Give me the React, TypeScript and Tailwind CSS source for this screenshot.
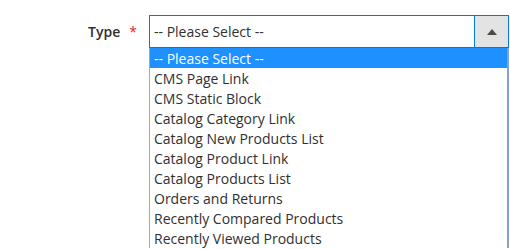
const options = [
  "-- Please Select --",
  "CMS Page Link",
  "CMS Static Block",
  "Catalog Category Link",
  "Catalog New Products List",
  "Catalog Product Link",
  "Catalog Products List",
  "Orders and Returns",
  "Recently Compared Products",
  "Recently Viewed Products",
];

export default function App() {
  return (
    <div className="w-[510px] h-[249px] overflow-hidden bg-white font-['Open_Sans',sans-serif] text-[14px] text-[#303030]">
      <div className="flex pt-[15px]">
        <div className="w-[149px] flex justify-end items-center h-[33px] pr-[12px]">
          <span className="font-semibold text-[14px] text-[#303030]">Type</span>
          <span className="text-[#e22626] ml-[9px] text-[14px]">*</span>
        </div>
        <div className="w-[360px] flex flex-col">
          <div className="flex h-[33px] border border-[#007bdb] bg-white">
            <div className="flex-1 flex items-center pl-[4px] leading-none">-- Please Select --</div>
            <div className="w-[34px] bg-[#e3e3e3] border-l border-[#007bdb] flex items-center justify-center">
              <svg width="10" height="6" viewBox="0 0 10 6">
                <path d="M0 6 L5 0 L10 6 Z" fill="#514943" />
              </svg>
            </div>
          </div>
          <ul className="border-l border-l-[#a6a6a6] border-r-2 border-r-[#7ea3dc]">
            {options.map((o, i) => (
              <li
                key={o}
                className={
                  "h-[20px] leading-[20px] pl-[4px] pt-[1px] " +
                  (i === 0 ? "bg-[#1e90ff] text-white" : "text-[#303030]")
                }
              >
                {o}
              </li>
            ))}
          </ul>
        </div>
      </div>
    </div>
  );
}
